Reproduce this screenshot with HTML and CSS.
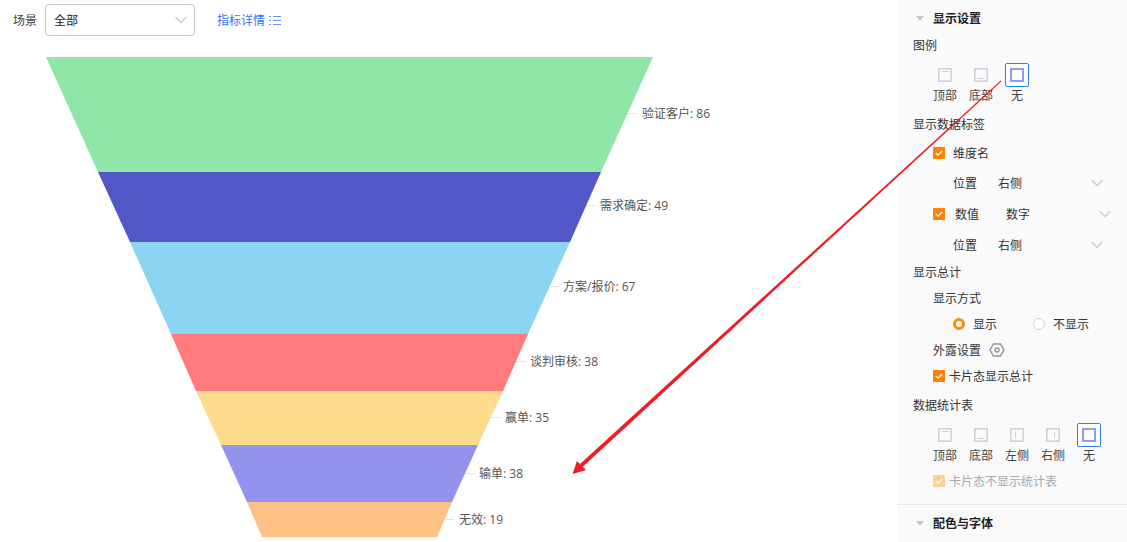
FILE: index.html
```html
<!DOCTYPE html>
<html lang="zh">
<head>
<meta charset="utf-8">
<title>漏斗图</title>
<link rel="stylesheet" href="styles.css">
</head>
<body>
<div class="page">
  <main class="main">
    <div class="toolbar">
      <span class="scene-label">场景</span>
      <div class="select"><span>全部</span>
        <svg class="chev" width="14" height="8" viewBox="0 0 14 8"><path d="M1.500 1 7 6.500 12.500 1" /></svg>
      </div>
      <a class="detail">指标详情
        <svg width="12" height="11" viewBox="0 0 12 11"><path class="list" d="M0 1.500h2M4 1.500h8M0 5.500h2M4 5.500h8M0 9.500h2M4 9.500h8"/></svg>
      </a>
    </div>
    <svg class="funnel" width="897" height="485" viewBox="0 57 897 485">
      <polygon fill="#8fe6a8" points="46,57 653,57 601,172 98,172"/>
      <polygon fill="#5356c6" points="98,172 601,172 570,242 130,242"/>
      <polygon fill="#8bd4f2" points="130,242 570,242 528,334 171,334"/>
      <polygon fill="#ff7b7c" points="171,334 528,334 503,391 196,391"/>
      <polygon fill="#ffdc8b" points="196,391 503,391 478,445 221,445"/>
      <polygon fill="#9393ef" points="221,445 478,445 452,502 247,502"/>
      <polygon fill="#ffc085" points="247,502 452,502 437,537 262,537"/>
      <g class="leader">
        <path d="M627 113.500h10M586 205.500h10M549 286.500h10M516 361.500h10M491 417.500h10M465 473.500h10M444 519.500h10"/>
      </g>
      <g class="flabel">
        <text x="642" y="118">验证客户: 86</text>
        <text x="600" y="210">需求确定: 49</text>
        <text x="563" y="291">方案/报价: 67</text>
        <text x="530" y="366">谈判审核: 38</text>
        <text x="505" y="422">赢单: 35</text>
        <text x="479" y="478">输单: 38</text>
        <text x="459" y="524">无效: 19</text>
      </g>
    </svg>
  </main>

  <aside class="panel">
    <div class="section-head"><i class="tri"></i><b>显示设置</b></div>
    <div class="row lvl0 h-legend">图例</div>
    <div class="icons">
      <div class="opt"><span class="ico"><svg width="14" height="14" viewBox="0 0 14 14"><rect class="o" x=".75" y=".75" width="12.500" height="12.500"/><path class="m" d="M3.500 3.500h7"/></svg></span>顶部</div>
      <div class="opt"><span class="ico"><svg width="14" height="14" viewBox="0 0 14 14"><rect class="o" x=".75" y=".75" width="12.500" height="12.500"/><path class="m" d="M3.500 10.500h7"/></svg></span>底部</div>
      <div class="opt"><span class="ico sel"><svg width="14" height="14" viewBox="0 0 14 14"><rect class="s" x="1" y="1" width="12" height="12"/></svg></span>无</div>
    </div>
    <div class="row lvl0 h-labels">显示数据标签</div>
    <div class="row lvl1 h-dim"><span class="cb"><svg width="12" height="12" viewBox="0 0 12 12"><path d="M2.800 6 5 8.200 9.200 3.800"/></svg></span><span class="cb-text">维度名</span></div>
    <div class="row lvl2 h-pos1"><span class="k">位置</span><span>右侧</span><svg class="chev end" width="14" height="8" viewBox="0 0 14 8"><path d="M1.500 1 7 6.500 12.500 1"/></svg></div>
    <div class="row lvl1 h-val"><span class="cb"><svg width="12" height="12" viewBox="0 0 12 12"><path d="M2.800 6 5 8.200 9.200 3.800"/></svg></span><span class="val-k">数值</span><span>数字</span><svg class="chev end" width="14" height="8" viewBox="0 0 14 8"><path d="M1.500 1 7 6.500 12.500 1"/></svg></div>
    <div class="row lvl2 h-pos2"><span class="k">位置</span><span>右侧</span><svg class="chev end" width="14" height="8" viewBox="0 0 14 8"><path d="M1.500 1 7 6.500 12.500 1"/></svg></div>
    <div class="row lvl0 h-total">显示总计</div>
    <div class="row lvl1 h-mode">显示方式</div>
    <div class="row lvl2 h-radio">
      <span class="radio on"></span><span class="r-first">显示</span>
      <span class="radio"></span><span class="r-second">不显示</span>
    </div>
    <div class="row lvl1 h-expose">外露设置
      <svg class="hex" width="16" height="16" viewBox="0 0 16 16"><path d="M4.500 2h7L15 8l-3.500 6h-7L1 8z"/><circle cx="8" cy="8" r="2"/></svg>
    </div>
    <div class="row lvl1 h-card"><span class="cb"><svg width="12" height="12" viewBox="0 0 12 12"><path d="M2.800 6 5 8.200 9.200 3.800"/></svg></span><span class="cb-tight">卡片态显示总计</span></div>
    <div class="row lvl0 h-table">数据统计表</div>
    <div class="icons icons-b">
      <div class="opt"><span class="ico"><svg width="14" height="14" viewBox="0 0 14 14"><rect class="o" x=".75" y=".75" width="12.500" height="12.500"/><path class="m" d="M3.500 3.500h7"/></svg></span>顶部</div>
      <div class="opt"><span class="ico"><svg width="14" height="14" viewBox="0 0 14 14"><rect class="o" x=".75" y=".75" width="12.500" height="12.500"/><path class="m" d="M3.500 10.500h7"/></svg></span>底部</div>
      <div class="opt"><span class="ico"><svg width="14" height="14" viewBox="0 0 14 14"><rect class="o" x=".75" y=".75" width="12.500" height="12.500"/><path class="m" d="M5.500 3.500v7"/></svg></span>左侧</div>
      <div class="opt"><span class="ico"><svg width="14" height="14" viewBox="0 0 14 14"><rect class="o" x=".75" y=".75" width="12.500" height="12.500"/><path class="m" d="M8.500 3.500v7"/></svg></span>右侧</div>
      <div class="opt"><span class="ico sel"><svg width="14" height="14" viewBox="0 0 14 14"><rect class="s" x="1" y="1" width="12" height="12"/></svg></span>无</div>
    </div>
    <div class="row lvl1 h-nocard muted"><span class="cb off"><svg width="12" height="12" viewBox="0 0 12 12"><path d="M2.800 6 5 8.200 9.200 3.800"/></svg></span><span class="cb-tight">卡片态不显示统计表</span></div>
    <div class="divider"></div>
    <div class="section-head"><i class="tri"></i><b>配色与字体</b></div>
  </aside>

  <svg class="arrow" width="1127" height="542" viewBox="0 0 1127 542">
    <polygon fill="#ee1c25" points="1001.300,81.400 1000.700,80.600 580,464 582.500,467"/>
    <polygon fill="#ee1c25" points="572.500,474 577,461 586,470"/>
  </svg>
</div>
</body>
</html>
```

FILE: styles.css
```css
* { box-sizing: border-box; }
html, body { margin: 0; padding: 0; }
body {
  width: 1127px; height: 542px; overflow: hidden; background: #fff;
  font: 12px/18px "Noto Sans CJK SC", "Noto Sans", sans-serif; color: #333;
  white-space: nowrap;
}
.page { position: relative; display: flex; width: 1127px; height: 542px; overflow: hidden; }
.main { width: 897px; flex: none; }
.toolbar { display: flex; align-items: center; height: 57px; padding: 0 0 17px 13px; }
.scene-label { width: 32px; color: #444; }
.select {
  display: flex; align-items: center; justify-content: space-between;
  width: 150px; height: 32px; padding: 0 6px 0 8px;
  background: #fff; border: 1px solid #c5c8d0; border-radius: 4px; color: #222;
}
.detail { display: flex; align-items: center; gap: 4px; margin-left: 22px; color: #2f73f0; }
.list { fill: none; stroke: #6b93f5; stroke-width: 1.200; }
.chev path { fill: none; stroke: #c8ccd6; stroke-width: 1.300; }
.funnel { display: block; }
.leader path { fill: none; stroke: #e3e5ea; stroke-width: 1; }
.flabel text { font-family: "Open Sans", "Noto Sans CJK SC", sans-serif; font-size: 12px; fill: #555; }

.panel { width: 230px; flex: none; padding: 0 0 0 16px; background: #fafafa; color: #333; }
.section-head { display: flex; align-items: center; height: 36px; color: #222; }
.section-head b { font-weight: 700; margin-left: 9px; }
.tri {
  width: 0; height: 0; margin-left: 3px;
  border-left: 4px solid transparent; border-right: 4px solid transparent; border-top: 5px solid #c4c7ce;
}
.row { display: flex; align-items: center; }
.lvl0 { padding-left: 0; }
.lvl1 { padding-left: 20px; }
.lvl2 { padding-left: 40px; }
.h-legend { height: 18px; }
.icons { display: flex; height: 44px; margin-top: 9px; padding-left: 14px; }
.opt { display: flex; flex-direction: column; align-items: center; width: 36px; color: #444; line-height: 16px; }
.ico { display: flex; align-items: center; justify-content: center; width: 24px; height: 24px; }
.ico.sel { border: 1px solid #2f7cf6; border-radius: 2px; background: #fff; }
.o { fill: none; stroke: #cdd2dc; stroke-width: 1.700; }
.m { fill: none; stroke: #cdd2dc; stroke-width: 1; }
.s { fill: none; stroke: #8f9bf5; stroke-width: 2; }
.h-labels { height: 25px; margin-top: 4px; }
.h-dim { height: 34px; }
.cb {
  display: inline-flex; width: 12px; height: 12px; border-radius: 1px; background: #ff8106; flex: none;
}
.cb path { fill: none; stroke: #fff; stroke-width: 1.200; }
.cb.off { background: #ffcf94; }
.cb-text { margin-left: 8px; }
.cb-tight { margin-left: 4px; }
.k { width: 45px; }
.h-pos1 { height: 26px; }
.h-val { height: 36px; }
.h-pos2 { height: 26px; }
.val-k { width: 51px; margin-left: 10px; }
.end { margin-left: 68px; }
.h-total { height: 28px; }
.h-mode { height: 24px; }
.h-radio { height: 28px; }
.radio { width: 12px; height: 12px; border: 1px solid #cfd2d8; border-radius: 50%; background: #fff; flex: none; }
.radio.on { border: 3px solid #ff8a0c; }
.r-first { margin-left: 8px; width: 60px; }
.r-second { margin-left: 8px; }
.h-expose { height: 24px; }
.hex { margin-left: 8px; }
.hex path, .hex circle { fill: none; stroke: #8d929c; stroke-width: 1.400; }
.h-card { height: 28px; }
.h-table { height: 30px; }
.icons-b { margin-top: 3px; height: 44px; padding-left: 14px; }
.h-nocard { height: 24px; margin-top: 2px; }
.muted { color: #a5a8ae; }
.divider { height: 1px; margin: 11px 0 0 -16px; background: #e5e6e9; }

.arrow { position: absolute; left: 0; top: 0; pointer-events: none; }
```
